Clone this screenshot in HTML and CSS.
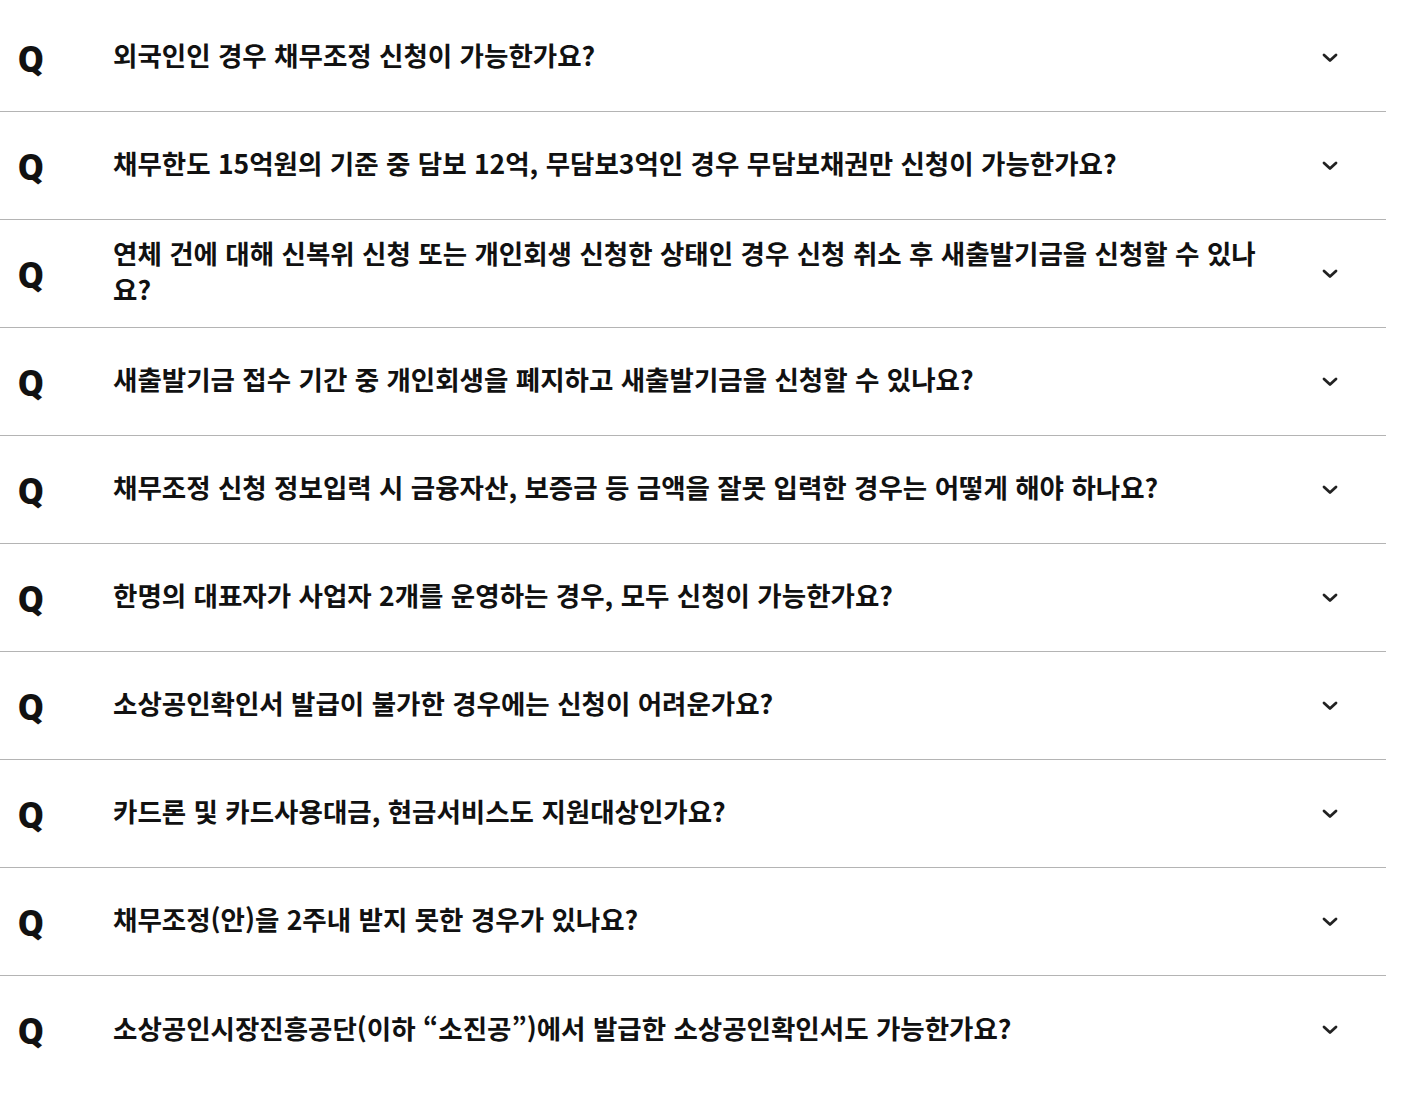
FILE: index.html
```html
<!DOCTYPE html>
<html lang="ko">
<head>
<meta charset="utf-8">
<title>FAQ</title>
<link rel="stylesheet" href="styles.css">
</head>
<body>
<ul class="faq">
  <li class="item"><span class="q">Q</span><p class="question">외국인인 경우 채무조정 신청이 가능한가요?</p><span class="toggle"><svg width="16" height="10" viewBox="0 0 16 10"><path d="M2 2 L8 7.5 L14 2" fill="none" stroke="#222" stroke-width="2.8" stroke-linecap="round" stroke-linejoin="round"/></svg></span></li>
  <li class="item"><span class="q">Q</span><p class="question">채무한도 15억원의 기준 중 담보 12억, 무담보3억인 경우 무담보채권만 신청이 가능한가요?</p><span class="toggle"><svg width="16" height="10" viewBox="0 0 16 10"><path d="M2 2 L8 7.5 L14 2" fill="none" stroke="#222" stroke-width="2.8" stroke-linecap="round" stroke-linejoin="round"/></svg></span></li>
  <li class="item"><span class="q">Q</span><p class="question">연체 건에 대해 신복위 신청 또는 개인회생 신청한 상태인 경우 신청 취소 후 새출발기금을 신청할 수 있나요?</p><span class="toggle"><svg width="16" height="10" viewBox="0 0 16 10"><path d="M2 2 L8 7.5 L14 2" fill="none" stroke="#222" stroke-width="2.8" stroke-linecap="round" stroke-linejoin="round"/></svg></span></li>
  <li class="item"><span class="q">Q</span><p class="question">새출발기금 접수 기간 중 개인회생을 폐지하고 새출발기금을 신청할 수 있나요?</p><span class="toggle"><svg width="16" height="10" viewBox="0 0 16 10"><path d="M2 2 L8 7.5 L14 2" fill="none" stroke="#222" stroke-width="2.8" stroke-linecap="round" stroke-linejoin="round"/></svg></span></li>
  <li class="item"><span class="q">Q</span><p class="question">채무조정 신청 정보입력 시 금융자산, 보증금 등 금액을 잘못 입력한 경우는 어떻게 해야 하나요?</p><span class="toggle"><svg width="16" height="10" viewBox="0 0 16 10"><path d="M2 2 L8 7.5 L14 2" fill="none" stroke="#222" stroke-width="2.8" stroke-linecap="round" stroke-linejoin="round"/></svg></span></li>
  <li class="item"><span class="q">Q</span><p class="question">한명의 대표자가 사업자 2개를 운영하는 경우, 모두 신청이 가능한가요?</p><span class="toggle"><svg width="16" height="10" viewBox="0 0 16 10"><path d="M2 2 L8 7.5 L14 2" fill="none" stroke="#222" stroke-width="2.8" stroke-linecap="round" stroke-linejoin="round"/></svg></span></li>
  <li class="item"><span class="q">Q</span><p class="question">소상공인확인서 발급이 불가한 경우에는 신청이 어려운가요?</p><span class="toggle"><svg width="16" height="10" viewBox="0 0 16 10"><path d="M2 2 L8 7.5 L14 2" fill="none" stroke="#222" stroke-width="2.8" stroke-linecap="round" stroke-linejoin="round"/></svg></span></li>
  <li class="item"><span class="q">Q</span><p class="question">카드론 및 카드사용대금, 현금서비스도 지원대상인가요?</p><span class="toggle"><svg width="16" height="10" viewBox="0 0 16 10"><path d="M2 2 L8 7.5 L14 2" fill="none" stroke="#222" stroke-width="2.8" stroke-linecap="round" stroke-linejoin="round"/></svg></span></li>
  <li class="item"><span class="q">Q</span><p class="question">채무조정(안)을 2주내 받지 못한 경우가 있나요?</p><span class="toggle"><svg width="16" height="10" viewBox="0 0 16 10"><path d="M2 2 L8 7.5 L14 2" fill="none" stroke="#222" stroke-width="2.8" stroke-linecap="round" stroke-linejoin="round"/></svg></span></li>
  <li class="item"><span class="q">Q</span><p class="question">소상공인시장진흥공단(이하 “소진공”)에서 발급한 소상공인확인서도 가능한가요?</p><span class="toggle"><svg width="16" height="10" viewBox="0 0 16 10"><path d="M2 2 L8 7.5 L14 2" fill="none" stroke="#222" stroke-width="2.8" stroke-linecap="round" stroke-linejoin="round"/></svg></span></li>
</ul>
</body>
</html>
```

FILE: styles.css
```css
html, body {
  margin: 0;
  padding: 0;
  background: #ffffff;
}

body {
  font-family: "Noto Sans CJK KR", "Noto Sans", sans-serif;
  color: #111111;
}

.faq {
  list-style: none;
  margin: 0;
  padding: 0;
  width: 1386px;
}

.item {
  display: flex;
  align-items: center;
  box-sizing: border-box;
  min-height: 108px;
  border-bottom: 1px solid #b4b4b4;
}

.item:first-child {
  min-height: 112px;
  padding-top: 4px;
}

.item:last-child {
  border-bottom: none;
}

.q {
  flex: 0 0 95px;
  margin-left: 18px;
  margin-top: 4px;
  font-family: Roboto, "Liberation Sans", sans-serif;
  font-weight: 900;
  font-size: 37px;
  line-height: 36px;
  color: #111111;
}

.question {
  flex: 1 1 auto;
  margin: 0 0 5px 0;
  font-size: 26.5px;
  font-weight: 700;
  line-height: 36px;
  color: #111111;
}

.toggle {
  flex: 0 0 112px;
  display: flex;
  justify-content: center;
  align-items: center;
}

.toggle svg {
  display: block;
}
```
